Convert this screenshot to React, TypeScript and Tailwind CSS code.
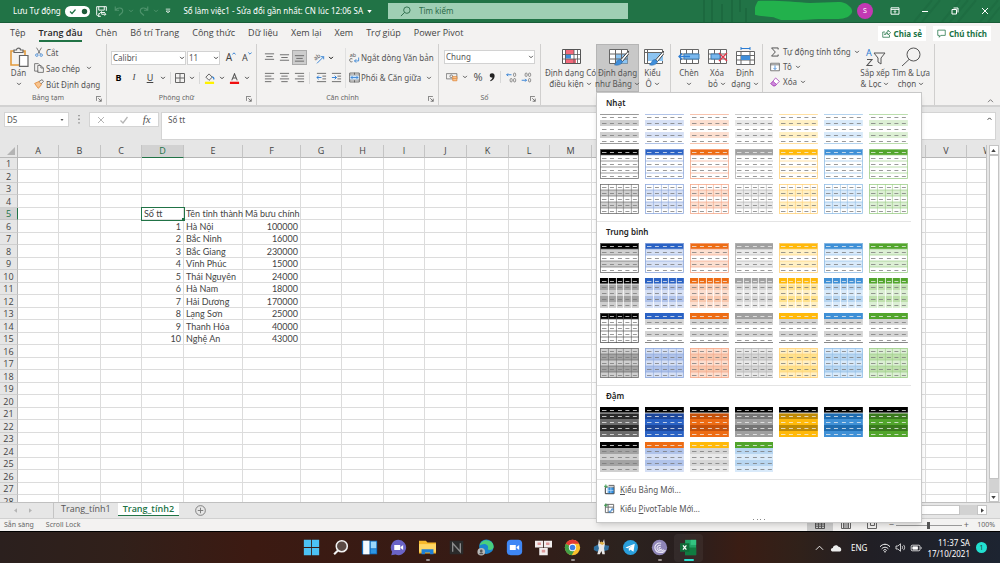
import type { ReactNode } from 'react';

type Band = 'light1' | 'light2' | 'light3' | 'medium1' | 'medium2' | 'medium3' | 'medium4' | 'dark1' | 'dark2';

interface Theme {
  main: string;
  deep: string;
  line: string;
  soft: string;
  pale: string;
}

const themes: Theme[] = [
  { main: '#000000', deep: '#1c1c1c', line: '#6f6f6f', soft: '#a3a3a3', pale: '#cfcfcf' },
  { main: '#2a62c4', deep: '#1d479b', line: '#8ea9dc', soft: '#b0c3ea', pale: '#d6e0f5' },
  { main: '#ed6c14', deep: '#c5520b', line: '#f4a98a', soft: '#f8c8ae', pale: '#fcdfd0' },
  { main: '#a0a0a0', deep: '#757575', line: '#b5b5b5', soft: '#d6d6d6', pale: '#e9e9e9' },
  { main: '#ffb90a', deep: '#bf8a05', line: '#ffd27a', soft: '#ffe28c', pale: '#fff0c4' },
  { main: '#3f90d6', deep: '#1f6cb0', line: '#93bfe6', soft: '#b8d6f1', pale: '#d9eafa' },
  { main: '#52a52c', deep: '#3a7a1d', line: '#9fcf8a', soft: '#bfe0ad', pale: '#dcefd4' },
];

const columns = [
  { name: 'A', width: 'w-[41px]' },
  { name: 'B', width: 'w-[42px]' },
  { name: 'C', width: 'w-[41px]' },
  { name: 'D', width: 'w-[42px]' },
  { name: 'E', width: 'w-[59px]' },
  { name: 'F', width: 'w-[58px]' },
  { name: 'G', width: 'w-[41px]' },
  { name: 'H', width: 'w-[42px]' },
  { name: 'I', width: 'w-[41px]' },
  { name: 'J', width: 'w-[42px]' },
  { name: 'K', width: 'w-[42px]' },
  { name: 'L', width: 'w-[41px]' },
  { name: 'M', width: 'w-[42px]' },
  { name: 'N', width: 'w-[42px]' },
  { name: 'O', width: 'w-[42px]' },
  { name: 'P', width: 'w-[41px]' },
  { name: 'Q', width: 'w-[42px]' },
  { name: 'R', width: 'w-[42px]' },
  { name: 'S', width: 'w-[41px]' },
  { name: 'T', width: 'w-[42px]' },
  { name: 'U', width: 'w-[42px]' },
  { name: 'V', width: 'w-[41px]' },
  { name: 'W', width: 'w-[42px]' },
];

const provinces = [
  ['Hà Nội', '100000'],
  ['Bắc Ninh', '16000'],
  ['Bắc Giang', '230000'],
  ['Vĩnh Phúc', '15000'],
  ['Thái Nguyên', '24000'],
  ['Hà Nam', '18000'],
  ['Hải Dương', '170000'],
  ['Lạng Sơn', '25000'],
  ['Thanh Hóa', '40000'],
  ['Nghệ An', '43000'],
];

const cells: Record<string, string> = { D5: 'Số tt', E5: 'Tên tỉnh thành', F5: 'Mã bưu chính' };
provinces.forEach(([name, code], i) => {
  cells[`D${i + 6}`] = String(i + 1);
  cells[`E${i + 6}`] = name;
  cells[`F${i + 6}`] = code;
});

const rows = Array.from({ length: 28 }, (_, i) => i + 1);

const menuTabs = ['Tệp', 'Trang đầu', 'Chèn', 'Bố trí Trang', 'Công thức', 'Dữ liệu', 'Xem lại', 'Xem', 'Trợ giúp', 'Power Pivot'];

function Chevron({ className = '' }: { className?: string }) {
  return (
    <svg viewBox="0 0 8 8" className={`size-[6px] shrink-0 ${className}`} fill="none" stroke="currentColor" strokeWidth="1.3">
      <path d="M1.5 2.5 4 5l2.5-2.5" />
    </svg>
  );
}

function Icon({ size = 'size-3', children, box = 16 }: { size?: string; children: ReactNode; box?: number }) {
  return (
    <svg viewBox={`0 0 ${box} ${box}`} className={`${size} shrink-0`} fill="none" stroke="#555" strokeWidth="1.2">
      {children}
    </svg>
  );
}

function IconButton({ label, children, className = '' }: { label: string; children: ReactNode; className?: string }) {
  return (
    <button type="button" aria-label={label} className={`flex shrink-0 items-center justify-center ${className}`}>
      {children}
    </button>
  );
}

/* ---------- Title bar ---------- */

function TitleBar() {
  return (
    <header className="relative flex h-[22px] shrink-0 items-center bg-[#217346] text-white">
      <svg viewBox="0 0 300 22" className="absolute right-0 top-0 h-full w-[300px]" fill="none" stroke="#1c693f" strokeWidth="2">
        <path d="M4 0v22M12 0v22M22 4v18M32 0v22M40 0v12M46 8v14" />
        <path d="M214 22l18-22M222 22l18-22M242 22l18-22M250 22l18-22M258 22l18-22M280 22l18-22M288 22l12-15" opacity=".6" />
      </svg>
      <div className="relative flex w-[388px] shrink-0 items-center pl-[13px]">
        <label htmlFor="autosave" className="whitespace-nowrap text-[8px]">Lưu Tự động</label>
        <span className="relative ml-1 block h-[11px] w-[25px]">
          <input id="autosave" type="checkbox" defaultChecked className="block h-[11px] w-[25px] appearance-none rounded-full bg-white" />
          <svg viewBox="0 0 25 11" className="pointer-events-none absolute inset-0" fill="none">
            <path d="M5 5.5l2 2 3.5-4" stroke="#217346" strokeWidth="1.2" />
            <circle cx="19.5" cy="5.5" r="2.7" fill="#1d5c39" />
          </svg>
        </span>
        <IconButton label="Lưu" className="ml-[6px]">
          <svg viewBox="0 0 16 16" className="size-[11px]" fill="none" stroke="#fff" strokeWidth="1.4">
            <path d="M1 1h14v6M1 1v12l2 2h4M4 1v5h8V1M7 9.500h6M8.500 8l-2 1.500 2 1.500M14 12H8M12.500 10.500l2 1.500-2 2M4 15v-4h2" />
          </svg>
        </IconButton>
        <IconButton label="Hoàn tác" className="ml-[6px] gap-[3px] text-[#4f946d]">
          <svg viewBox="0 0 16 16" className="size-3" fill="none" stroke="currentColor" strokeWidth="1.5">
            <path d="M3 2v5h5M3.500 6.500C6 3 13 3 13 8c0 3-3 4-5 6" />
          </svg>
          <Chevron />
        </IconButton>
        <IconButton label="Làm lại" className="ml-1 gap-[3px] text-[#4f946d]">
          <svg viewBox="0 0 16 16" className="size-3" fill="none" stroke="currentColor" strokeWidth="1.5">
            <path d="M13 2v5H8M12.500 6.500C10 3 3 3 3 8c0 3 3 4 5 6" />
          </svg>
          <Chevron />
        </IconButton>
        <IconButton label="Tùy chỉnh" className="ml-[6px]">
          <svg viewBox="0 0 8 8" className="size-[6px]" fill="none" stroke="#fff">
            <path d="M1 1.500h6M1.500 4 4 6.500 6.500 4z" />
          </svg>
        </IconButton>
        <button type="button" className="ml-auto mr-4 flex items-center gap-1 whitespace-nowrap text-[8px]">
          Sổ làm việc1 - Sửa đổi gần nhất: CN lúc 12:06 SA
          <svg viewBox="0 0 6 4" className="h-[3px] w-[5px]" fill="#fff"><path d="M0 0h6L3 4z" /></svg>
        </button>
      </div>
      <div className="relative flex h-4 w-[24%] items-center gap-2 bg-[#9fcfb4] pl-3">
        <svg viewBox="0 0 12 12" className="size-[11px]" fill="none" stroke="#2c6b49">
          <circle cx="7.500" cy="4.500" r="3.500" />
          <path d="M5 7 1 11" />
        </svg>
        <input aria-label="Tìm kiếm" placeholder="Tìm kiếm" className="min-w-0 flex-1 bg-transparent text-[8px] outline-none placeholder:text-[#2c6b49]" />
      </div>
      <div className="relative ml-auto flex h-full items-center">
        <svg viewBox="0 0 98 20" className="mr-1 h-5 w-[98px] self-start" fill="#22b14c">
          <path d="M3 1C20 0 40 2 55 3l28-1c6 0 9 2 11 4 4 3 4 7 1 9-4 5-16 4-25 4-14 0-29 2-44 1-4-1-6-3-10-3-8-1-14-1-18-3C-1 10 1 4 3 1z" />
        </svg>
        <span className="mr-[17px] flex size-4 items-center justify-center rounded-full bg-[#c239b3] text-[7px]">S</span>
        <IconButton label="Tùy chọn ribbon" className="mr-[21px]">
          <svg viewBox="0 0 12 10" className="h-[8px] w-[10px]" fill="none" stroke="#fff" strokeWidth="1.200">
            <path d="M1 1h10v8H1zM1 3h10M6 8V5M4.500 6 6 4.500 7.500 6" />
          </svg>
        </IconButton>
        <IconButton label="Thu nhỏ" className="mr-[22px]">
          <svg viewBox="0 0 8 8" className="size-2" stroke="#fff"><path d="M1 4.500h6" /></svg>
        </IconButton>
        <IconButton label="Khôi phục" className="mr-[22px]">
          <svg viewBox="0 0 8 8" className="size-2" fill="none" stroke="#fff"><path d="M1 2.500h4.500V7H1zM2.500 1H7v4.500" /></svg>
        </IconButton>
        <IconButton label="Đóng" className="mr-[11px]">
          <svg viewBox="0 0 8 8" className="size-2" stroke="#fff"><path d="M1 1l6 6M7 1 1 7" /></svg>
        </IconButton>
      </div>
    </header>
  );
}

function MenuTabs() {
  return (
    <nav className="flex h-[22px] shrink-0 items-center border-t border-[#185c37] pl-[10px] pr-[9px]">
      <div className="flex gap-[13px] font-['Open_Sans',sans-serif] text-[9px] leading-[14px] text-[#444]">
        {menuTabs.map((tab) => (
          <button
            key={tab}
            type="button"
            className={`whitespace-nowrap border-b-2 ${tab === 'Trang đầu' ? 'border-[#217346] font-semibold text-[#262626]' : 'border-transparent'}`}
          >
            {tab}
          </button>
        ))}
      </div>
      <div className="ml-auto flex gap-[7px] text-[8px] font-bold text-[#217346]">
        <button type="button" className="flex h-[15px] items-center gap-[3px] bg-white px-1">
          <svg viewBox="0 0 12 12" className="size-[9px]" fill="none" stroke="currentColor">
            <path d="M4 4H1v7h9V8M3.500 8C4 5 6 4 8 4V1.500L11.500 5 8 8V6C6 6 4.500 6.500 3.500 8z" />
          </svg>
          Chia sẻ
        </button>
        <button type="button" className="flex h-[15px] items-center gap-[3px] bg-white px-1">
          <svg viewBox="0 0 12 12" className="size-[9px]" fill="none" stroke="currentColor">
            <path d="M1 1.500h10v7H5L3 11V8.500H1z" />
          </svg>
          Chú thích
        </button>
      </div>
    </nav>
  );
}

/* ---------- Ribbon ---------- */

function Group({ label, width, launcher = false, children }: { label: string; width: string; launcher?: boolean; children: ReactNode }) {
  return (
    <section className={`flex shrink-0 flex-col border-r border-[#d0cfce] ${width}`}>
      <div className="flex h-12 items-stretch">{children}</div>
      <div className="flex h-[13px] items-center justify-center pr-1 text-[7px] text-[#666]">
        <span className="flex-1 text-center">{label}</span>
        {launcher && (
          <IconButton label={`Tùy chọn ${label}`}>
            <svg viewBox="0 0 8 8" className="size-[6px]" fill="none" stroke="#555">
              <path d="M.5 6.500v-6h6M3 3l4 4M7 3.500V7H3.500" />
            </svg>
          </IconButton>
        )}
      </div>
    </section>
  );
}

function BigButton({ icon, lines, width, arrow = 'inline', active = false }: { icon: ReactNode; lines: string[]; width: string; arrow?: 'inline' | 'below'; active?: boolean }) {
  return (
    <button
      type="button"
      className={`flex h-12 shrink-0 flex-col items-center pt-[2px] text-[8px] leading-[10px] text-[#555] ${width} ${active ? 'bg-[#c8c8c8] ring-1 ring-inset ring-[#b5b5b5]' : ''}`}
    >
      <span className="flex h-[22px] items-center">{icon}</span>
      <span className="whitespace-nowrap">{lines[0]}</span>
      <span className="flex h-[11px] items-center gap-[2px] whitespace-nowrap">
        {arrow === 'inline' && lines[1]}
        <Chevron />
      </span>
    </button>
  );
}

function SelectBox({ label, value, width }: { label: string; value: string; width: string }) {
  return (
    <span className={`relative block h-[14px] ${width}`}>
      <select aria-label={label} className="block h-full w-full appearance-none border border-[#d2d2d2] bg-white pl-px pr-3 text-[8px] leading-[12px] text-[#555]">
        <option>{value}</option>
      </select>
      <Chevron className="pointer-events-none absolute right-px top-1" />
    </span>
  );
}

function AlignIcon({ kind }: { kind: 'top' | 'middle' | 'bottom' | 'left' | 'center' | 'right' }) {
  const paths = {
    top: 'M1 2h10M2.500 5h7M1 8h10',
    middle: 'M1 3h10M2.500 6h7M1 9h10',
    bottom: 'M1 4h10M2.500 7h7M1 10h10',
    left: 'M1 1.500h10M1 4.500h7M1 7.500h10M1 10.500h7',
    center: 'M1 1.500h10M2.500 4.500h7M1 7.500h10M2.500 10.500h7',
    right: 'M1 1.500h10M4 4.500h7M1 7.500h10M4 10.500h7',
  };
  return (
    <svg viewBox="0 0 12 12" className="size-[11px]" stroke="#666">
      <path d={paths[kind]} />
    </svg>
  );
}

function GridIcon({ children }: { children?: ReactNode }) {
  return (
    <svg viewBox="0 0 22 20" className="h-5 w-[22px]" fill="none" stroke="#666">
      <path fill="#fff" d="M2.500 2.500h18v14h-18z" />
      {children}
    </svg>
  );
}

function BrushArt() {
  return (
    <>
      <path d="M21.500 4l-8 9 2 1.500 6.500-8z" fill="#fff" stroke="#444" />
      <path d="M13 12.500c-3 0-3 3-5.500 5.500 3 .5 7 0 8-3.500z" fill="#3f8edb" stroke="#2b6fb0" strokeWidth=".6" />
    </>
  );
}

function ClipboardGroup() {
  return (
    <Group label="Bảng tạm" width="w-[107px]" launcher>
      <BigButton
        width="ml-[6px] w-[25px]"
        arrow="below"
        lines={['Dán']}
        icon={
          <svg viewBox="0 0 20 20" className="size-5" fill="none" strokeWidth="1.200">
            <path d="M2 4h14v14H2z" stroke="#e39a3b" strokeWidth="1.600" />
            <path d="M5 5.500V3h2.500c0-2.500 4-2.500 4 0H14v2.500z" fill="#f3f2f1" stroke="#666" />
            <path d="M10.500 8.500h8.500v10.800h-8.500z" fill="#fff" stroke="#666" />
          </svg>
        }
      />
      <div className="flex flex-col justify-center gap-px pl-[3px] text-[8px] leading-[15px] text-[#555]">
        <button type="button" className="flex items-center gap-[2px]">
          <Icon size="size-[10px]">
            <path d="M4 1l6 10M12 1 6 11" />
            <circle cx="4.500" cy="13" r="2" stroke="#2b7cd3" />
            <circle cx="11.500" cy="13" r="2" stroke="#2b7cd3" />
          </Icon>
          Cắt
        </button>
        <button type="button" className="flex items-center gap-[2px] whitespace-nowrap">
          <Icon size="size-[10px]">
            <path d="M7 13H1V1h6l2 2M6 4h5l4 4v7H6zM11 4v4h4" />
          </Icon>
          Sao chép
          <Chevron className="ml-1" />
        </button>
        <button type="button" className="flex items-center gap-[2px] whitespace-nowrap">
          <Icon size="size-[10px]">
            <path d="M1 7l7-3 4 5-5 6C5 13 3 10 1 7z" stroke="#e0812b" fill="#f7c48f" />
            <path d="M8 4l5-3 2 3-4 4" />
          </Icon>
          Bút Định dạng
        </button>
      </div>
    </Group>
  );
}

function FontGroup() {
  return (
    <Group label="Phông chữ" width="w-[150px]" launcher>
      <div className="flex flex-col gap-[6px] pl-1 pt-[6px] text-[#444]">
        <div className="flex items-center gap-px">
          <SelectBox label="Phông" value="Calibri" width="w-[75px]" />
          <SelectBox label="Cỡ chữ" value="11" width="w-[33px]" />
          <IconButton label="Tăng cỡ chữ" className="ml-1 w-3 text-[10px]">
            A<svg viewBox="0 0 6 4" className="mb-2 h-[3px] w-1" fill="none" stroke="#2b7cd3" strokeWidth="1.400"><path d="M.5 3.500 3 1l2.500 2.500" /></svg>
          </IconButton>
          <IconButton label="Giảm cỡ chữ" className="ml-[3px] w-3 text-[9px]">
            A<svg viewBox="0 0 6 4" className="mb-2 h-[3px] w-1" fill="none" stroke="#2b7cd3" strokeWidth="1.400"><path d="M.5.500 3 3 5.500.500" /></svg>
          </IconButton>
        </div>
        <div className="flex h-[14px] items-center text-[9px]">
          <IconButton label="Đậm" className="w-[15px] font-bold text-black">B</IconButton>
          <IconButton label="Nghiêng" className="w-4 font-['Liberation_Serif',serif] italic">I</IconButton>
          <IconButton label="Gạch chân" className="w-4 underline">U</IconButton>
          <Chevron className="ml-[2px]" />
          <span className="mx-1 h-3 border-l border-[#d8d8d8]" />
          <IconButton label="Viền" className="gap-1">
            <svg viewBox="0 0 10 10" className="size-[10px]" fill="none" stroke="#666"><path d="M.5.500h9v9h-9zM5 .5v9M.5 5h9" /></svg>
            <Chevron />
          </IconButton>
          <span className="mx-1 h-3 border-l border-[#d8d8d8]" />
          <IconButton label="Màu tô" className="gap-1">
            <svg viewBox="0 0 12 12" className="size-[11px]" fill="none">
              <path d="M5.500 1 9 4.500 5.500 8 2 4.500z" stroke="#555" />
              <path d="M9 4c2 1 2 2 1.500 3" stroke="#2b7cd3" strokeWidth="1.300" />
              <path d="M1 9.500h10v2.500H1z" fill="#fff200" />
            </svg>
            <Chevron />
          </IconButton>
          <IconButton label="Màu phông" className="ml-1 gap-1">
            <svg viewBox="0 0 12 12" className="size-[11px]" fill="none">
              <path d="M3 8 6 .800 9 8M4 5.500h4" stroke="#555" strokeWidth="1.100" />
              <path d="M1 9.500h10v2.500H1z" fill="#f01010" />
            </svg>
            <Chevron />
          </IconButton>
        </div>
      </div>
    </Group>
  );
}

function AlignGroup() {
  return (
    <Group label="Căn chỉnh" width="w-[182px]" launcher>
      <div className="flex w-[88px] shrink-0 flex-col gap-[5px] pl-[5px] pt-[6px]">
        <div className="flex h-[15px] items-center">
          <IconButton label="Căn trên" className="w-[15px]"><AlignIcon kind="top" /></IconButton>
          <IconButton label="Căn giữa dọc" className="w-[15px]"><AlignIcon kind="middle" /></IconButton>
          <IconButton label="Căn dưới" className="h-[15px] w-[15px] border border-[#aaa] bg-[#cdcdcd]"><AlignIcon kind="bottom" /></IconButton>
          <IconButton label="Hướng" className="ml-[6px] gap-[3px]">
            <svg viewBox="0 0 18 18" className="size-3 overflow-visible" fill="none">
              <text x="2" y="11" fontSize="9" fill="#555" transform="rotate(-35 6 10)">ab</text>
              <path d="M6 17 16 7M16 7v4M16 7h-4" stroke="#2b7cd3" strokeWidth="1.300" />
            </svg>
            <Chevron />
          </IconButton>
        </div>
        <div className="flex h-[15px] items-center">
          <IconButton label="Căn trái" className="w-[15px]"><AlignIcon kind="left" /></IconButton>
          <IconButton label="Căn giữa" className="w-[15px]"><AlignIcon kind="center" /></IconButton>
          <IconButton label="Căn phải" className="w-[15px]"><AlignIcon kind="right" /></IconButton>
          <span className="ml-[2px] mr-1 h-3 border-l border-[#d8d8d8]" />
          <IconButton label="Giảm thụt lề" className="w-[15px]">
            <svg viewBox="0 0 12 12" className="size-[11px]" stroke="#666" fill="none">
              <path d="M1 1.500h10M7 4.500h4M7 7.500h4M1 10.500h10" />
              <path d="M6 6H1M3 4 1 6l2 2" stroke="#2b7cd3" />
            </svg>
          </IconButton>
          <IconButton label="Tăng thụt lề" className="w-[15px]">
            <svg viewBox="0 0 12 12" className="size-[11px]" stroke="#666" fill="none">
              <path d="M1 1.500h10M7 4.500h4M7 7.500h4M1 10.500h10" />
              <path d="M1 6h5M4 4l2 2-2 2" stroke="#2b7cd3" />
            </svg>
          </IconButton>
        </div>
      </div>
      <div className="my-1 flex flex-col gap-[5px] border-l border-[#e0e0e0] pl-[3px] pt-[2px] text-[8px] text-[#555]">
        <button type="button" className="flex h-[15px] items-center gap-px whitespace-nowrap">
          <Icon size="size-[11px]">
            <text x="1" y="7" fontSize="8" stroke="none" fill="#555">ab</text>
            <path d="M5 10c-3-1-4 0-4 2s2 3 4 2" />
            <path d="M14 8v5H8M10.500 10.500 8 13l2.500 2.500" stroke="#2b7cd3" />
          </Icon>
          Ngắt dòng Văn bản
        </button>
        <button type="button" className="flex h-[15px] items-center gap-px whitespace-nowrap">
          <Icon size="size-[11px]">
            <path d="M1 1.500h14v13H1zM1 4.500h14M1 11.500h14M8 1v3M8 12v3" />
            <path d="M1.500 5h13v6h-13z" fill="#cfe4f8" stroke="none" />
            <path d="M3 8h10M5 6 3 8l2 2M11 6l2 2-2 2" stroke="#2b7cd3" />
          </Icon>
          Phối &amp; Căn giữa
          <Chevron className="ml-1" />
        </button>
      </div>
    </Group>
  );
}

function NumberGroup() {
  return (
    <Group label="Số" width="w-[102px]" launcher>
      <div className="flex flex-1 flex-col gap-[6px] px-[5px] pt-[6px] text-[#555]">
        <SelectBox label="Định dạng số" value="Chung" width="w-full" />
        <div className="flex h-[14px] items-center">
          <IconButton label="Tiền tệ" className="gap-1 pl-[2px]">
            <svg viewBox="0 0 16 12" className="h-[10px] w-[12px]" fill="none" stroke="#666">
              <path d="M.5 1.500h14v7H.5z" />
              <circle cx="7" cy="5" r="1.800" />
              <path d="M9 5.500h5.500v5.500H9zM9 8.200h5" stroke="#e0812b" fill="#f9cda3" />
            </svg>
            <Chevron />
          </IconButton>
          <IconButton label="Phần trăm" className="ml-[3px] w-[14px] text-[11px]">%</IconButton>
          <IconButton label="Dấu phẩy" className="ml-1">
            <svg viewBox="0 0 8 12" className="h-[10px] w-[6px]" fill="#222"><path d="M4 1c3 0 3.800 2 3.400 4.500C7 8.500 5 10.500 2 11.500l-.5-1C3.500 9.500 4.500 8 4.600 6.700 2.500 7 1 6 1 4s1-3 3-3z" /></svg>
          </IconButton>
          <span className="mx-[5px] h-3 border-l border-[#d8d8d8]" />
          <IconButton label="Tăng chữ số thập phân">
            <svg viewBox="0 0 16 16" className="size-[11px]" fill="none" stroke="#666">
              <rect x="11" y="1.500" width="3" height="5" rx="1.500" />
              <rect x="6" y="9.500" width="3" height="5" rx="1.500" />
              <rect x="11" y="9.500" width="3" height="5" rx="1.500" />
              <path d="M8 4H1M3 2 1 4l2 2" stroke="#2b7cd3" strokeWidth="1.300" />
            </svg>
          </IconButton>
          <IconButton label="Giảm chữ số thập phân" className="ml-1">
            <svg viewBox="0 0 16 16" className="size-[11px]" fill="none" stroke="#666">
              <rect x="6" y="1.500" width="3" height="5" rx="1.500" />
              <rect x="11" y="1.500" width="3" height="5" rx="1.500" />
              <rect x="11" y="9.500" width="3" height="5" rx="1.500" />
              <path d="M1 12h7M6 10l2 2-2 2" stroke="#2b7cd3" strokeWidth="1.300" />
            </svg>
          </IconButton>
        </div>
      </div>
    </Group>
  );
}

function StyleGroup() {
  return (
    <Group label="" width="w-[130px]">
      <BigButton
        width="ml-1 w-[51px]"
        lines={['Định dạng Có', 'điều kiện']}
        icon={
          <svg viewBox="0 0 22 20" className="h-5 w-[22px]" fill="none" stroke="#555">
            <path fill="#fff" d="M2.500 2.500h18v14h-18z" />
            <path d="M5 3h9v4H5zM5 12h11v4H5z" fill="#f2697b" stroke="none" />
            <path d="M5 7.500h6v4H5z" fill="#3f8edb" stroke="none" />
            <path d="M2.500 7.500h18M2.500 12h18M5.500 2.500v14M14 2.500v14M17.500 2.500v14" strokeWidth=".8" />
          </svg>
        }
      />
      <div className="relative">
        <BigButton
          active
          width="w-[43px]"
          lines={['Định dạng', 'như Bảng']}
          icon={
            <GridIcon>
              <path d="M8.500 7h12v9.500h-12z" fill="#8cc4f2" stroke="none" />
              <path d="M2.500 7h18M2.500 12h18M8.500 2.500v14M14.500 2.500v14" />
              <BrushArt />
            </GridIcon>
          }
        />
        <StyleGallery />
      </div>
      <BigButton
        width="w-[27px]"
        lines={['Kiểu', 'Ô']}
        icon={
          <GridIcon>
            <path d="M5 6h16v8H5z" fill="#8cc4f2" stroke="none" />
            <path d="M2.500 5.500h18M5.500 2.500v14" />
            <BrushArt />
          </GridIcon>
        }
      />
    </Group>
  );
}

function CellsGroup() {
  return (
    <Group label="" width="w-[92px]">
      <BigButton
        width="ml-1 w-7"
        arrow="below"
        lines={['Chèn']}
        icon={
          <GridIcon>
            <path d="M2.500 7h18M2.500 12h18M8.500 2.500v14M14.500 2.500v14" />
            <path d="M6 7h15v5H6z" fill="#7ab8ee" stroke="#3f7fb5" />
            <path d="M12 9.500H1M4 6.500l-3 3 3 3" stroke="#2b7cd3" strokeWidth="1.300" />
          </GridIcon>
        }
      />
      <BigButton
        width="w-7"
        lines={['Xóa', 'bỏ']}
        icon={
          <GridIcon>
            <path d="M2.500 7h18M2.500 12h18M8.500 2.500v14M14.500 2.500v14" />
            <path d="M5 7h9v5H5z" fill="#7ab8ee" stroke="#3f7fb5" />
            <path d="M13 6l8 8M21 6l-8 8" stroke="#e0394a" strokeWidth="1.400" />
          </GridIcon>
        }
      />
      <BigButton
        width="w-7"
        lines={['Định', 'dạng']}
        icon={
          <svg viewBox="0 0 22 20" className="h-5 w-[22px]" fill="none" stroke="#666">
            <path fill="#fff" d="M2.500 4.500h18v13h-18z" />
            <path d="M2.500 8.500h18M2.500 13h18M7 4.500v13M16 4.500v13" />
            <path d="M7 8.500h9v4.500H7z" fill="#3f8edb" stroke="none" />
            <path d="M7 1.500h9M7 0v3M16 0v3" stroke="#2b7cd3" />
          </svg>
        }
      />
    </Group>
  );
}

function EditGroup() {
  return (
    <Group label="" width="w-[172px]">
      <div className="flex w-[95px] shrink-0 flex-col pl-[7px] text-[8px] leading-[15px] text-[#555]">
        <button type="button" className="flex items-center gap-[3px] whitespace-nowrap">
          <Icon size="size-[10px]"><path d="M13 4V1.500H2.500L8.500 8l-6 6.500H13V12" strokeWidth="1.600" /></Icon>
          Tự động tính tổng
          <Chevron className="ml-auto" />
        </button>
        <button type="button" className="flex items-center gap-[3px]">
          <Icon size="size-[10px]">
            <path d="M1 2h14v12H1zM1 4.500h14" fill="#fff" />
            <path d="M8 5.500V12M5.500 9.500 8 12l2.500-2.500" stroke="#2b7cd3" />
          </Icon>
          Tô <Chevron />
        </button>
        <button type="button" className="flex items-center gap-[3px]">
          <Icon size="size-[10px]">
            <path d="M9 1.500 15 7l-7 7H5L1.500 10.500z" stroke="#a33ab5" fill="#fff" />
            <path d="M1.500 10.500 5 7l5.500 5L8 14H5z" fill="#cf8bdc" stroke="#a33ab5" />
          </Icon>
          Xóa <Chevron />
        </button>
      </div>
      <BigButton
        width="w-[34px]"
        lines={['Sắp xếp', '& Lọc']}
        icon={
          <svg viewBox="0 0 22 20" className="h-5 w-[22px]" fill="none">
            <text x="2" y="9" fontSize="9" fill="#2b7cd3">A</text>
            <path d="M3 12.500h5L3 18.500h5.500" stroke="#555" strokeWidth="1.100" />
            <path d="M10 6h11l-4 5v6l-3-2v-4z" stroke="#555" />
          </svg>
        }
      />
      <BigButton
        width="w-[38px]"
        lines={['Tìm & Lựa', 'chọn']}
        icon={
          <svg viewBox="0 0 20 20" className="size-5" fill="none" stroke="#555">
            <circle cx="12.500" cy="7.500" r="6.500" />
            <path d="M8 12.500 1 19" />
          </svg>
        }
      />
    </Group>
  );
}

/* ---------- Table style gallery ---------- */

const rowTops = [0, 6, 12, 18, 24];

function bandFill(kind: Band, t: Theme, alt: Theme, i: number, black: boolean) {
  const odd = i % 2 === 1;
  switch (kind) {
    case 'light1':
    case 'light3':
      return odd ? t.pale : '#fff';
    case 'light2':
      return i === 0 ? t.main : '#fff';
    case 'medium1':
      return i === 0 ? t.main : odd ? t.pale : '#fff';
    case 'medium2':
      return i === 0 ? t.main : odd ? t.soft : t.pale;
    case 'medium3':
      return i === 0 ? t.main : odd && !black ? '#d4d4d4' : '#fff';
    case 'medium4':
      return odd ? t.soft : t.pale;
    case 'dark1':
      if (i === 0) return '#000';
      if (black) return odd ? '#2a2a2a' : '#6b6b6b';
      return odd ? t.deep : t.main;
    case 'dark2':
      return i === 0 ? t.main : odd ? alt.soft : alt.pale;
  }
}

function StyleThumb({ kind, theme, alt = theme }: { kind: Band; theme: Theme; alt?: Theme }) {
  const black = theme.main === '#000000';
  const columned = kind === 'light3' || kind === 'medium4' || (kind === 'medium3' && black);
  const framed = columned || kind === 'light2' || kind === 'medium1';
  const solidHeader = kind !== 'light1' && kind !== 'light3' && kind !== 'medium4';
  const line = kind === 'medium3' ? '#555' : theme.line;
  return (
    <svg viewBox="0 0 39 30" className="block h-[30px] w-full" preserveAspectRatio="none">
      {rowTops.map((y, i) => (
        <rect key={y} x="0" y={y} width="39" height="6" fill={bandFill(kind, theme, alt, i, black)} />
      ))}
      {framed && <path d="M0 6h39M0 12h39M0 18h39M0 24h39" stroke={line} strokeWidth=".7" />}
      {columned && <path d="M8.500 0v30M16.500 0v30M23.500 0v30M31.500 0v30" stroke={line} strokeWidth=".6" />}
      {kind === 'medium2' && <path d="M8.500 0v30M16.500 0v30M23.500 0v30M31.500 0v30M0 6h39" stroke="#fff" strokeWidth=".8" />}
      {kind === 'dark1' && <path d="M0 6h39" stroke="#fff" strokeWidth=".8" />}
      {framed && <rect x=".5" y=".5" width="38" height="29" fill="none" stroke={line} strokeWidth=".8" />}
      {kind === 'light1' && <path d="M0 .5h39M0 29.500h39" stroke={theme.line} strokeWidth=".7" />}
      {kind === 'medium3' && !black && <path d="M0 29.500h39" stroke="#888" />}
      {rowTops.map((y, i) => (
        <path
          key={y}
          d={`M2 ${y + 3.5}h4.500M10 ${y + 3.5}h4M18 ${y + 3.5}h4M25.500 ${y + 3.5}h4M33 ${y + 3.5}h4`}
          stroke={(solidHeader && i === 0) || kind === 'dark1' ? '#f2f2f2' : '#777'}
          strokeWidth="1"
          opacity=".75"
        />
      ))}
    </svg>
  );
}

function GallerySection({ title, kinds }: { title: string; kinds: Band[] }) {
  return (
    <section className="mr-[10px] border-b border-[#e4e4e4] pb-[7px] pl-[3px]">
      <h3 className="pb-[6px] pl-[6px] pt-1 text-[8px] font-semibold leading-[11px] text-[#222]">{title}</h3>
      <div className="grid grid-cols-7 gap-x-[6px] gap-y-[5px] pr-[3px]">
        {kinds.map((kind) =>
          themes.map((theme) => (
            <button key={kind + theme.main} type="button" aria-label={title}>
              <StyleThumb kind={kind} theme={theme} />
            </button>
          )),
        )}
      </div>
    </section>
  );
}

function StyleGallery() {
  const [black, blue, orange, gray, yellow, sky, green] = themes;
  const mixed = [
    [black, { ...gray, soft: '#a3a3a3', pale: '#d0d0d0' }],
    [orange, blue],
    [yellow, gray],
    [green, sky],
  ];
  return (
    <div className="absolute left-0 top-full z-20 w-[326px] border border-[#c8c8c8] bg-white shadow-md">
      <GallerySection title="Nhạt" kinds={['light1', 'light2', 'light3']} />
      <GallerySection title="Trung bình" kinds={['medium1', 'medium2', 'medium3', 'medium4']} />
      <section className="border-b border-[#e4e4e4] pb-[7px] pl-[3px]">
        <h3 className="pb-[6px] pl-[6px] pt-1 text-[8px] font-semibold leading-[11px] text-[#222]">Đậm</h3>
        <div className="mr-[13px] grid grid-cols-7 gap-x-[6px] gap-y-[5px]">
          {themes.map((theme) => (
            <button key={theme.main} type="button" aria-label="Đậm">
              <StyleThumb kind="dark1" theme={theme} />
            </button>
          ))}
          {mixed.map(([head, body]) => (
            <button key={head.main} type="button" aria-label="Đậm">
              <StyleThumb kind="dark2" theme={head} alt={body} />
            </button>
          ))}
        </div>
      </section>
      <div className="flex flex-col text-[8px] leading-[19px] text-[#555]">
        <button type="button" className="flex items-center gap-[5px] pl-[7px]">
          <svg viewBox="0 0 12 12" className="size-[11px]" fill="none" stroke="#555">
            <path d="M1.500 3.500h9v7h-9z" fill="#fff" />
            <path d="M4 4h7v7H4z" fill="#2f8ee0" stroke="none" />
            <path d="M4.500 3.500v7M7.500 3.500v7M1.500 7h9" stroke="#cfe4f8" strokeWidth=".7" />
            <path d="M5 1.500h6v9M1.500 4v6.500H11" />
            <path d="M0 2.500h4M2 .5v4" stroke="#3a9b4d" />
          </svg>
          <span><u>K</u>iểu Bảng Mới...</span>
        </button>
        <button type="button" className="flex items-center gap-[5px] pl-[7px]">
          <svg viewBox="0 0 12 12" className="size-[11px]" fill="none" stroke="#666">
            <path d="M1.500 1.500h9v9h-9zM1.500 4.500h9M4.500 1.500v9" fill="#fff" />
            <path d="M6 9.500c2 0 3-1 3-3M8 7.500l1-1.500 1.500 1.500M7 8 5.500 9.500 7 11" stroke="#2f7fd0" />
            <path d="M0 2.500h4M2 .5v4" stroke="#3a9b4d" />
          </svg>
          <span>Kiểu <u>P</u>ivotTable Mới...</span>
        </button>
      </div>
      <svg viewBox="0 0 12 4" className="mx-auto block h-1 w-3" fill="#888">
        <path d="M0 1h1v1H0zM4 1h1v1H4zM7 1h1v1H7zM11 1h1v1h-1z" />
      </svg>
    </div>
  );
}

/* ---------- Formula bar ---------- */

function FormulaBar() {
  return (
    <div className="flex shrink-0 items-start px-1 py-[5px] text-[8px] text-[#555]">
      <label className="flex h-[15px] w-[65px] shrink-0 items-center border border-[#d4d4d4] bg-white">
        <input aria-label="Ô" defaultValue="D5" className="w-full min-w-0 bg-transparent pl-[2px] outline-none" />
        <svg viewBox="0 0 6 4" className="mr-1 h-[2px] w-1 shrink-0" fill="#555"><path d="M0 0h6L3 4z" /></svg>
      </label>
      <svg viewBox="0 0 2 10" className="mx-[9px] mt-[3px] h-[9px] w-[2px]" fill="#999"><path d="M0 0h2v1.500H0zM0 4h2v1.500H0zM0 8h2v1.500H0z" /></svg>
      <div className="flex h-[15px] w-[70px] shrink-0 items-center justify-around border border-[#d4d4d4] bg-white">
        <IconButton label="Hủy"><svg viewBox="0 0 8 8" className="size-2" stroke="#b5b5b5"><path d="M1 1l6 6M7 1 1 7" /></svg></IconButton>
        <IconButton label="Nhập"><svg viewBox="0 0 8 8" className="size-2" fill="none" stroke="#b5b5b5" strokeWidth="1.300"><path d="M.5 4.500 3 7l4.500-6" /></svg></IconButton>
        <IconButton label="Chèn hàm" className="font-['Liberation_Serif',serif] text-[11px] italic leading-none">fx</IconButton>
      </div>
      <div className="ml-[2px] flex h-7 flex-1 items-start border border-[#d4d4d4] bg-white">
        <input aria-label="Công thức" defaultValue="Số tt" className="h-[13px] min-w-0 flex-1 bg-transparent pl-[6px] outline-none" />
        <IconButton label="Thu gọn" className="p-[3px]"><svg viewBox="0 0 8 6" className="h-[5px] w-[5px]" fill="none" stroke="#444" strokeWidth="1.600"><path d="M1 5l3-3 3 3" /></svg></IconButton>
      </div>
    </div>
  );
}

/* ---------- Sheet ---------- */

function Sheet() {
  return (
    <main className="flex min-h-0 flex-1 bg-[#e6e6e6]">
      <div className="min-w-0 flex-1 overflow-hidden bg-white">
        <table className="w-0 table-fixed border-separate border-spacing-0 font-['Lato','Noto_Sans',sans-serif] text-[9px]">
          <colgroup>
            <col className="w-[18px]" />
            {columns.map((c) => <col key={c.name} className={c.width} />)}
          </colgroup>
          <thead>
            <tr className="h-[13px] font-['Open_Sans',sans-serif] text-[9px] leading-[12px] text-[#444]">
              <th className="border-b border-r border-[#b8b8b8] bg-[#e6e6e6] p-0">
                <svg viewBox="0 0 8 8" className="ml-auto mr-[2px] block size-2" fill="#b4b4b4"><path d="M8 0v8H0z" /></svg>
              </th>
              {columns.map((c) => (
                <th
                  key={c.name}
                  className={`border-b border-r p-0 font-normal ${c.name === 'D' ? 'border-b-[#217346] border-r-[#c4c4c4] bg-[#d2d2d2] text-[#217346]' : 'border-b-[#b8b8b8] border-r-[#c4c4c4] bg-[#e6e6e6]'}`}
                >
                  {c.name}
                </th>
              ))}
            </tr>
          </thead>
          <tbody>
            {rows.map((row) => (
              <tr key={row} className="leading-[11px] odd:h-[12px] even:h-[13px]">
                <th
                  className={`border-b border-r p-0 font-['Open_Sans',sans-serif] text-[9px] font-normal ${row === 5 ? 'border-b-[#c4c4c4] border-r-[#217346] bg-[#d2d2d2] text-[#217346]' : 'border-b-[#cfcfcf] border-r-[#b8b8b8] bg-[#e6e6e6] text-[#444]'}`}
                >
                  {row}
                </th>
                {columns.map((c) => {
                  const value = cells[c.name + row];
                  const right = row > 5 && c.name !== 'E';
                  const selected = c.name === 'D' && row === 5;
                  return (
                    <td
                      key={c.name}
                      className={`whitespace-nowrap border-b border-r border-[#dcdcdc] px-[2px] py-0 text-[#444] ${right ? 'text-right' : ''} ${selected ? 'relative outline outline-[#217346]' : ''}`}
                    >
                      {value}
                      {selected && <span className="absolute -bottom-[2px] -right-[2px] size-[3px] bg-[#217346]" />}
                    </td>
                  );
                })}
              </tr>
            ))}
          </tbody>
        </table>
      </div>
      <div className="flex w-[14px] shrink-0 flex-col items-center border-l border-[#c4c4c4] bg-[#e6e6e6]">
        <IconButton label="Cuộn lên" className="size-[10px] border border-[#c4c4c4] bg-white">
          <svg viewBox="0 0 6 4" className="h-[3px] w-[5px]" fill="#444"><path d="M0 4h6L3 0z" /></svg>
        </IconButton>
        <span className="w-[10px] flex-1 border border-[#c4c4c4] bg-white" />
        <span className="h-[13px] w-[10px] bg-[#d2d2d2]" />
        <IconButton label="Cuộn xuống" className="size-[10px] border border-[#c4c4c4] bg-white">
          <svg viewBox="0 0 6 4" className="h-[3px] w-[5px]" fill="#444"><path d="M0 0h6L3 4z" /></svg>
        </IconButton>
      </div>
    </main>
  );
}

function SheetTabs() {
  return (
    <div className="flex h-4 shrink-0 items-start border-t border-[#c0c0c0] bg-[#e6e6e6] font-['Open_Sans',sans-serif] text-[9px] leading-[12px] text-[#555]">
      <div className="flex h-[15px] w-[54px] items-center gap-[12px] border-r border-[#c4c4c4] pl-[14px]">
        <IconButton label="Trang trước"><svg viewBox="0 0 4 6" className="h-[5px] w-[3px]" fill="#b5b5b5"><path d="M4 0v6L0 3z" /></svg></IconButton>
        <IconButton label="Trang sau"><svg viewBox="0 0 4 6" className="h-[5px] w-[3px]" fill="#b5b5b5"><path d="M0 0v6l4-3z" /></svg></IconButton>
      </div>
      <button type="button" className="px-[7px]">Trang_tính1</button>
      <button type="button" className="h-[13px] border-b border-[#217346] bg-white px-[5px] font-semibold text-[#217346]">Trang_tính2</button>
      <IconButton label="Thêm trang" className="ml-4 mt-[2px]">
        <svg viewBox="0 0 12 12" className="size-[11px]" fill="none" stroke="#777"><circle cx="6" cy="6" r="5.300" /><path d="M3 6h6M6 3v6" /></svg>
      </IconButton>
      <div className="ml-auto mr-[13px] mt-[2px] flex h-[10px] w-[34%]">
        <span className="flex-1 border border-[#c4c4c4] bg-white" />
        <span className="w-[17px] bg-[#d2d2d2]" />
        <IconButton label="Cuộn phải" className="w-[10px] border border-[#c4c4c4] bg-white">
          <svg viewBox="0 0 4 6" className="h-[5px] w-[3px]" fill="#444"><path d="M0 0v6l4-3z" /></svg>
        </IconButton>
      </div>
    </div>
  );
}

function StatusBar() {
  return (
    <footer className="flex h-[14px] shrink-0 items-center border-b border-t border-b-black border-t-[#d0d0d0] bg-[#f3f2f1] pl-1 pr-[5px] text-[7px] text-[#666]">
      <span>Sẵn sàng</span>
      <span className="ml-3">Scroll Lock</span>
      <div className="ml-auto flex h-full items-center">
        <IconButton label="Thường" className="h-full w-[26px] bg-[#cdcdcd]">
          <svg viewBox="0 0 10 8" className="h-2 w-[10px]" fill="none" stroke="#555"><path d="M.5.500h9v7h-9zM.5 3h9M.5 5.200h9M3.500.500v7M6.500.500v7" /></svg>
        </IconButton>
        <IconButton label="Bố trí trang" className="h-full w-[26px]">
          <svg viewBox="0 0 10 8" className="h-2 w-[10px]" fill="none" stroke="#666"><path d="M.5.500h9v7h-9zM2.500 2h5v5.500M2.500 2v5.500M3 4h4M3 6h4" /></svg>
        </IconButton>
        <IconButton label="Ngắt trang" className="h-full w-[26px]">
          <svg viewBox="0 0 10 8" className="h-2 w-[10px]" fill="none" stroke="#666"><path d="M.5.500h9v7h-9zM3.500.500v4h4v-4" /></svg>
        </IconButton>
        <span className="ml-1 text-[9px]">−</span>
        <input
          type="range"
          aria-label="Thu phóng"
          defaultValue="50"
          className="mx-[2px] h-[10px] w-[66px] appearance-none bg-transparent [&::-webkit-slider-runnable-track]:h-px [&::-webkit-slider-runnable-track]:bg-[#999] [&::-webkit-slider-thumb]:-mt-[3px] [&::-webkit-slider-thumb]:h-[7px] [&::-webkit-slider-thumb]:w-[3px] [&::-webkit-slider-thumb]:appearance-none [&::-webkit-slider-thumb]:bg-[#555]"
        />
        <span className="text-[9px]">+</span>
        <span className="ml-2 w-[18px] text-right">100%</span>
      </div>
    </footer>
  );
}

/* ---------- Taskbar ---------- */

const apps: { name: string; open?: boolean; active?: boolean; art: ReactNode }[] = [
  {
    name: 'Start',
    art: <path d="M1 1h8.500v8.500H1zM10.500 1H19v8.500h-8.500zM1 10.500h8.500V19H1zM10.500 10.500H19V19h-8.500z" fill="#4cc2f5" />,
  },
  {
    name: 'Search',
    art: (
      <>
        <circle cx="11.500" cy="8.500" r="6.500" fill="#5b4a45" stroke="#f2f2f2" strokeWidth="1.800" />
        <path d="M7 13.500 2.500 18" stroke="#f2f2f2" strokeWidth="2.400" />
      </>
    ),
  },
  {
    name: 'Widgets',
    art: (
      <>
        <path d="M1 2h18v16H1z" fill="#0f6cbd" />
        <path d="M2.500 2h7.500v16H2.500z" fill="#f4f9fd" />
        <path d="M11.500 3H18v8h-6.500z" fill="#9bd7fa" />
        <path d="M11.500 12H18v5h-6.500z" fill="#2f96e4" />
      </>
    ),
  },
  {
    name: 'Chat',
    art: (
      <>
        <path d="M10 1a9 9 0 1 1-3.500 17.300L1.500 19l1-4A9 9 0 0 1 10 1z" fill="#6a63c6" />
        <path d="M5 7h7v6H5zM12.500 9.500 15.500 7v6l-3-2.500z" fill="#fff" />
      </>
    ),
  },
  {
    name: 'Explorer',
    open: true,
    art: (
      <>
        <path d="M0 2h8l2 2h10v13H0z" fill="#f7b92c" />
        <path d="M0 6h20v9H0z" fill="#ffd766" />
        <path d="M3 12h14v6h-4v-2H7v2H3z" fill="#1f7fd6" />
      </>
    ),
  },
  {
    name: 'Netbeans',
    art: (
      <>
        <path d="M2 2h16v16H2z" fill="#2b2b2b" />
        <path d="M5.500 15V5l9 10V5" stroke="#8c8c8c" strokeWidth="1.600" fill="none" />
      </>
    ),
  },
  {
    name: 'Edge',
    art: (
      <>
        <circle cx="11" cy="9" r="8.500" fill="#1a86d0" />
        <path d="M3 8c1-5 6-8 11-6 4 1 6 5 5.500 8-.5 3-5 3.500-7 2 2-3-1-6-4-6-2 0-4 1-5.500 2z" fill="#49cf7d" />
        <circle cx="5" cy="15" r="4.500" fill="#b8b8b8" />
        <circle cx="5" cy="14" r="1.600" fill="#555" />
        <path d="M2.500 18c.5-3 4.500-3 5 0z" fill="#555" />
      </>
    ),
  },
  {
    name: 'Zoom',
    art: (
      <>
        <rect x="1" y="1" width="18" height="18" rx="4.500" fill="#3f87f5" />
        <path d="M4.500 7h7v6h-7zM12.500 9.500 15.500 7v6l-3-2.500z" fill="#fff" />
      </>
    ),
  },
  {
    name: 'UniKey',
    art: (
      <>
        <path d="M0 2h9.500v8H0zM10.500 2H20v8h-9.500zM5 10.500h10V19H5z" fill="#f1eded" />
        <path d="M3 4h4v3H3zM13 4h4v3h-4zM8 12.500h4V16H8z" fill="#d99" />
      </>
    ),
  },
  {
    name: 'Chrome',
    open: true,
    art: (
      <>
        <circle cx="10" cy="10" r="9" fill="#fbc02d" />
        <path d="M10 10 2.200 5.500A9 9 0 0 1 17.800 5.500H10z" fill="#e53935" />
        <path d="M10 10 2.200 5.500A9 9 0 0 0 9 19l4-7z" fill="#43a047" />
        <circle cx="10" cy="10" r="4.300" fill="#fff" />
        <circle cx="10" cy="10" r="3.300" fill="#3f7fe8" />
      </>
    ),
  },
  {
    name: 'Knight',
    art: (
      <>
        <path d="M1 9l6-3 6 1 6 1-1 5-5 1-3-3-5 4-4-2z" fill="#2f6f9e" />
        <path d="M7 0l2 6h2l2-6 1 6-1 5 1 7h-3l-1-4-2 4H5l2-7-1-4z" fill="#e8e8e8" />
        <path d="M7 5l3-2 4 2-3 2z" fill="#e0b24a" />
      </>
    ),
  },
  {
    name: 'Telegram',
    art: (
      <>
        <circle cx="10" cy="10" r="8.800" fill="#2a9fdc" />
        <path d="M4 10l11-4.500L13.500 15l-3.500-2.500-1.800 1.700-.4-3.200L12.500 7.500 6.500 11z" fill="#fff" />
      </>
    ),
  },
  {
    name: 'BitTorrent',
    open: true,
    art: (
      <>
        <circle cx="10" cy="10" r="9" fill="#8f86b8" />
        <path d="M17 13c-3 4-10 4-12-1S8 4 12 5M15 12.500c-2 2.500-6 2-7.500-.5S8.500 7 11.500 7.500M13 11.500c-1 1.500-3 1-3.500 0s.5-2 2-1.500" stroke="#e9e6f5" strokeWidth="1.300" fill="none" />
      </>
    ),
  },
  {
    name: 'Excel',
    open: true,
    active: true,
    art: (
      <>
        <path d="M6 1h13v18H6z" fill="#21a366" />
        <path d="M12.500 1H19v6h-6.500z" fill="#33c481" />
        <path d="M6 10h13v9H6z" fill="#107c41" />
        <path d="M0 5h11v10H0z" fill="#0f6b38" />
        <path d="M3.500 7.500l4 5M7.500 7.500l-4 5" stroke="#fff" strokeWidth="1.500" />
      </>
    ),
  },
];

function Taskbar() {
  return (
    <div className="flex h-[31px] shrink-0 items-center bg-[linear-gradient(90deg,#2b201e,#31201a_12%,#3c1a12_25%,#351b15_50%,#2c221e_62%,#281f1f_68%,#3a1d14_74%,#30211a_80%,#211f25_87%,#1d2431)] text-white">
      <div className="flex-1 pl-[13px]" />
      <div className="flex">
        {apps.map((app) => (
          <button
            key={app.name}
            type="button"
            aria-label={app.name}
            className={`flex h-7 w-[29px] flex-col items-center pt-[5px] ${app.active ? 'rounded bg-white/5' : ''}`}
          >
            <svg viewBox="0 0 20 20" className="size-[17px]">{app.art}</svg>
            {app.open && <span className={`mt-[3px] h-[2px] rounded-full ${app.active ? 'w-[10px] bg-[#2fe0d0]' : 'w-1 bg-[#9a9190]'}`} />}
          </button>
        ))}
      </div>
      <div className="flex flex-1 items-center justify-end pr-[13px] text-[8px] leading-[11px]">
        <svg viewBox="0 0 10 6" className="h-[6px] w-[9px]" fill="none" stroke="#fff"><path d="M1 5l4-4 4 4" /></svg>
        <svg viewBox="0 0 14 10" className="ml-[6px] h-2 w-3" fill="#eee"><path d="M3.500 9.500C-.5 9.500 0 5 3 5c.5-4 6-4.500 7-1.500C14 3.500 15 9.500 11 9.500z" /></svg>
        <span className="ml-[9px]">ENG</span>
        <svg viewBox="0 0 14 12" className="ml-3 h-[10px] w-3" fill="none" stroke="#fff" strokeWidth="1.200">
          <path d="M1 4.500c3.500-4 8.500-4 12 0M3 7c2.500-2.500 5.500-2.500 8 0M5 9c1.500-1.500 2.500-1.500 4 0" />
          <circle cx="7" cy="10.500" r="1" fill="#fff" stroke="none" />
        </svg>
        <svg viewBox="0 0 14 12" className="ml-1 h-[9px] w-[11px]" fill="none" stroke="#fff">
          <path d="M1 4h2.500L7 1v10L3.500 8H1zM9 4c1 1 1 3 0 4M11 2.500c2 2 2 5 0 7" />
        </svg>
        <svg viewBox="0 0 14 10" className="ml-1 h-2 w-3" fill="none" stroke="#fff">
          <rect x="1" y="1.500" width="11" height="7" rx="1.500" />
          <path d="M3 3.500h6v3H3z" fill="#fff" />
          <path d="M13.500 4v2" />
        </svg>
        <div className="ml-[5px] text-right">
          <div>11:37 SA</div>
          <div>17/10/2021</div>
        </div>
        <span className="ml-[6px] flex size-[11px] items-center justify-center rounded-full bg-[#22e0d0] text-[7px] text-[#173c3a]">1</span>
      </div>
    </div>
  );
}

export default function App() {
  return (
    <div className="flex h-screen flex-col overflow-hidden bg-[#e6e6e6] font-['Noto_Sans','Open_Sans',sans-serif] text-[8px]">
      <TitleBar />
      <div className="flex shrink-0 flex-col bg-[#f3f2f1]">
        <MenuTabs />
        <div className="flex border-b-2 border-[#d2d2d2]">
          <ClipboardGroup />
          <FontGroup />
          <AlignGroup />
          <NumberGroup />
          <StyleGroup />
          <CellsGroup />
          <EditGroup />
          <IconButton label="Thu gọn ribbon" className="ml-auto mr-[6px] self-end pb-[2px]">
            <svg viewBox="0 0 8 6" className="h-[5px] w-[7px]" fill="none" stroke="#666"><path d="M1 5l3-3 3 3" /></svg>
          </IconButton>
        </div>
      </div>
      <FormulaBar />
      <Sheet />
      <SheetTabs />
      <StatusBar />
      <Taskbar />
    </div>
  );
}
